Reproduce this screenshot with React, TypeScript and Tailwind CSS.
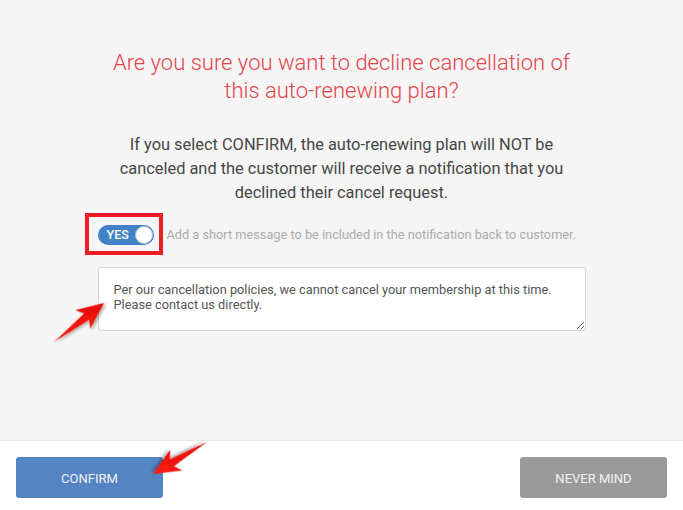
import React from "react";

function Arrow({ x1, y1, x2, y2, id }: { x1: number; y1: number; x2: number; y2: number; id: string }) {
  const dx = x2 - x1;
  const dy = y2 - y1;
  const L = Math.sqrt(dx * dx + dy * dy);
  const ang = (Math.atan2(dy, dx) * 180) / Math.PI;
  const pts = `0,0 ${L - 22},-4 ${L - 27},-12 ${L},0 ${L - 27},12 ${L - 22},4`;
  return (
    <g transform={`translate(${x1} ${y1}) rotate(${ang})`}>
      <polygon points={pts} fill={`url(#${id})`} filter="url(#arrowShadow)" />
    </g>
  );
}

export default function App() {
  return (
    <div
      className="relative w-[683px] h-[510px] bg-white overflow-hidden"
      style={{ fontFamily: "Roboto, 'Liberation Sans', sans-serif" }}
    >
      <div className="h-[441px] bg-[#f5f5f5] border-b border-[#e9e9e9] flex flex-col items-center pt-[49px]">
        <h1 className="text-[22px] leading-[28px] font-light text-[#e4434b] text-center w-[470px]">
          Are you sure you want to decline cancellation of this auto-renewing plan?
        </h1>
        <p className="mt-[28px] text-[16.4px] leading-[24px] text-[#474747] text-center w-[445px]">
          If you select CONFIRM, the auto-renewing plan will NOT be canceled and the customer will receive a
          notification that you declined their cancel request.
        </p>
        <div className="w-[488px] mt-[20px]">
          <div className="relative flex items-center h-[20px]">
            <div className="absolute left-[-13px] top-[-12px] w-[78px] h-[42px] border-[4px] border-[#ee1c25]" />
            <div className="w-[56px] h-[20px] rounded-full bg-[#4181c6] flex items-center justify-between pl-[9px] pr-[1px]">
              <span className="text-white text-[12.5px] font-medium leading-none">YES</span>
              <span className="w-[18px] h-[18px] rounded-full bg-white border border-[#b9c7d6]" />
            </div>
            <span className="ml-[13px] text-[12.75px] text-[#ababab]">
              Add a short message to be included in the notification back to customer.
            </span>
          </div>
          <textarea
            className="block mt-[22px] w-[488px] h-[64px] bg-white border border-[#d5d5d5] rounded-[3px] pt-[14px] px-[15px] text-[12.8px] leading-[15px] text-[#555] outline-none"
            defaultValue={"Per our cancellation policies, we cannot cancel your membership at this time.\nPlease contact us directly."}
          />
        </div>
      </div>
      <div className="flex items-center justify-between px-[16px] pt-[16px]">
        <button className="w-[147px] h-[41px] pt-[2px] rounded-[3px] bg-[#5584c4] text-[#f2f2f2] text-[13px]">CONFIRM</button>
        <button className="w-[147px] h-[41px] pt-[2px] rounded-[3px] bg-[#9a9a9a] text-[#f2f2f2] text-[13px]">NEVER MIND</button>
      </div>
      <svg className="absolute inset-0 pointer-events-none" width="683" height="510">
        <defs>
          <linearGradient id="g1" x1="0" y1="1" x2="1" y2="0">
            <stop offset="0" stopColor="#ff2a1a" />
            <stop offset="1" stopColor="#e00000" />
          </linearGradient>
          <linearGradient id="g2" x1="1" y1="0" x2="0" y2="1">
            <stop offset="0" stopColor="#ff2a1a" />
            <stop offset="1" stopColor="#e00000" />
          </linearGradient>
          <filter id="arrowShadow" x="-30%" y="-30%" width="160%" height="160%">
            <feDropShadow dx="1" dy="2" stdDeviation="1.5" floodColor="#000" floodOpacity="0.35" />
          </filter>
        </defs>
        <Arrow x1={54} y1={342} x2={104} y2={303} id="g1" />
        <Arrow x1={207} y1={442} x2={153} y2={474} id="g2" />
      </svg>
    </div>
  );
}
